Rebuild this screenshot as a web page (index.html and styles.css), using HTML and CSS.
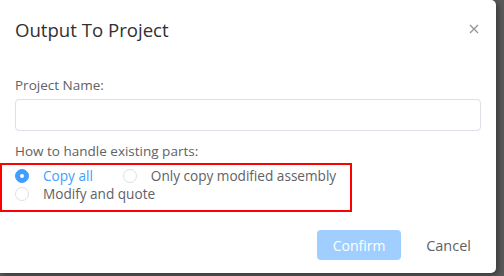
FILE: index.html
```html
<!DOCTYPE html>
<html lang="en">
<head>
  <meta charset="UTF-8" />
  <title>Output To Project</title>
  <link rel="stylesheet" href="styles.css">
</head>
<body>
<div class="dialog">
  <div class="dialogHeader">
    <span class="dialogTitle">Output To Project</span>
    <button class="closeBtn" aria-label="Close">
      <svg width="10" height="10" viewBox="0 0 10 10"><path d="M1 1L9 9M9 1L1 9" stroke="#909399" stroke-width="1.3" fill="none"/></svg>
    </button>
  </div>
  <div class="dialogBody">
    <label class="fieldLabel" for="project-name">Project Name:</label>
    <input id="project-name" class="textInput" type="text" spellcheck="false" />
    <p class="fieldLabel groupLabel">How to handle existing parts:</p>
    <div class="radioBox">
      <label class="radio checked">
        <span class="radioDot"></span>
        <span class="radioText">Copy all</span>
      </label>
      <label class="radio">
        <span class="radioDot"></span>
        <span class="radioText">Only copy modified assembly</span>
      </label>
      <label class="radio">
        <span class="radioDot"></span>
        <span class="radioText">Modify and quote</span>
      </label>
    </div>
  </div>
  <div class="dialogFooter">
    <button class="confirmBtn" disabled>Confirm</button>
    <button class="cancelBtn">Cancel</button>
  </div>
</div>
</body>
</html>
```

FILE: styles.css
```css
* { margin: 0; padding: 0; box-sizing: border-box; }
html, body {
  height: 100%;
  font-family: "Open Sans", "Liberation Sans", sans-serif;
  background-color: #5a5a5a;
  color: #606266;
}
.dialog {
  width: 496px;
  height: 273px;
  background-color: #fff;
  border-radius: 0 5px 5px 0;
  box-shadow: 2px 2px 6px rgba(0, 0, 0, 0.4);
}
.dialogHeader {
  display: flex;
  align-items: center;
  justify-content: space-between;
  height: 60px;
  padding: 0 13px 2px 15px;
}
.dialogTitle {
  font-size: 18.6px;
  color: #303133;
}
.closeBtn {
  border: none;
  background: none;
  display: flex;
  padding: 4px;
}
.dialogBody {
  padding: 16px 0 0;
}
.fieldLabel {
  display: block;
  margin-left: 15px;
  font-size: 13.5px;
  line-height: 18px;
}
.textInput {
  display: block;
  margin: 5px 0 0 15px;
  width: 466px;
  height: 32px;
  border: 1px solid #dcdfe6;
  border-radius: 4px;
  outline: none;
}
.groupLabel {
  margin-top: 11px;
}
.radioBox {
  display: flex;
  flex-wrap: wrap;
  align-content: flex-start;
  column-gap: 30px;
  row-gap: 0;
  width: 352px;
  height: 49px;
  margin-top: 3px;
  padding: 2px 0 0 13px;
  border: 2px solid #ff0000;
}
.radio {
  display: flex;
  align-items: center;
  height: 18px;
  font-size: 13.6px;
  line-height: 18px;
  color: #606266;
}
.radioDot {
  width: 14px;
  height: 14px;
  border: 1px solid #dcdfe6;
  border-radius: 50%;
  margin-right: 14px;
  position: relative;
}
.radio.checked .radioDot {
  background-color: #409eff;
  border-color: #409eff;
}
.radio.checked .radioDot::after {
  content: "";
  position: absolute;
  left: 4px;
  top: 4px;
  width: 4px;
  height: 4px;
  border-radius: 50%;
  background-color: #fff;
}
.radio.checked .radioText {
  color: #409eff;
}
.dialogFooter {
  display: flex;
  justify-content: flex-end;
  align-items: center;
  gap: 13px;
  padding: 18px 13px 0 0;
}
.confirmBtn {
  width: 84px;
  height: 30px;
  border: none;
  border-radius: 4px;
  background-color: #a0cfff;
  color: #fff;
  font-family: inherit;
  font-size: 14px;
}
.cancelBtn {
  height: 30px;
  padding: 0 12px;
  border: none;
  background: none;
  color: #606266;
  font-family: inherit;
  font-size: 14.5px;
}
```
